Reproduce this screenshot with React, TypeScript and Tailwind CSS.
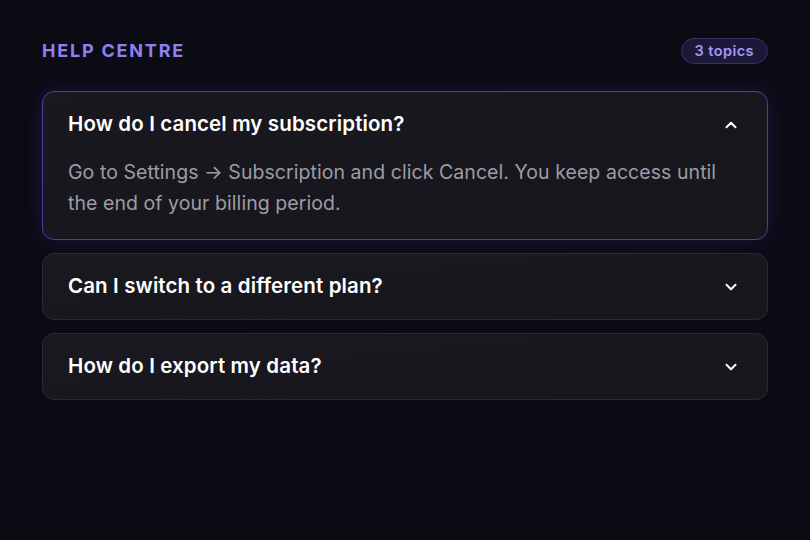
import React, { useState } from 'react';

const faqs = [
  {
    q: 'How do I cancel my subscription?',
    a: 'Go to Settings → Subscription and click Cancel. You keep access until the end of your billing period.',
  },
  {
    q: 'Can I switch to a different plan?',
    a: 'Yes. Pick a new plan from Settings → Subscription and the change applies from your next billing date.',
  },
  {
    q: 'How do I export my data?',
    a: 'Open Settings → Data and choose Export. We email you a download link within a few minutes.',
  },
];

const Chevron = ({ open }: { open: boolean }) => (
  <svg
    className="w-[18px] h-[18px] text-white"
    fill="none"
    stroke="currentColor"
    viewBox="0 0 24 24"
  >
    {open ? (
      <path strokeLinecap="round" strokeLinejoin="round" strokeWidth={2.6} d="M6 15l6-6 6 6" />
    ) : (
      <path strokeLinecap="round" strokeLinejoin="round" strokeWidth={2.6} d="M6 9l6 6 6-6" />
    )}
  </svg>
);

const App = () => {
  const [openIndex, setOpenIndex] = useState<number | null>(0);

  return (
    <div
      className="min-h-screen w-full bg-[#0b0b13] px-[42px] pt-[38px]"
      style={{ fontFamily: 'Inter, "Noto Sans", sans-serif' }}
    >
      {/* Header */}
      <div className="flex items-center justify-between h-[26px]">
        <h2 className="text-[18px] font-bold tracking-[0.1em] text-[#8f80f2] leading-none">
          HELP CENTRE
        </h2>
        <span className="h-[26px] px-[13px] flex items-center rounded-full bg-[#1c1938] border border-[#352e6b] text-[14.5px] font-semibold tracking-[0.03em] text-[#a497f7]">
          3 topics
        </span>
      </div>

      {/* Accordion */}
      <div className="mt-[27px] flex flex-col gap-[13px]">
        {faqs.map((item, index) => {
          const open = openIndex === index;
          return (
            <div
              key={index}
              className={
                open
                  ? 'rounded-[12px] border border-[#4b3fa6] bg-gradient-to-br from-[#19181f] to-[#17161d] shadow-[0_0_24px_rgba(90,70,220,0.18)]'
                  : 'rounded-[12px] border border-[#2a2935] bg-gradient-to-br from-[#1a1920] to-[#17161c]'
              }
            >
              <button
                onClick={() => setOpenIndex(open ? null : index)}
                className="w-full h-[65px] flex items-center justify-between pl-[25px] pr-[27px] text-left"
              >
                <span className="text-[20.5px] font-semibold text-white tracking-[0.006em]">{item.q}</span>
                <Chevron open={open} />
              </button>
              {open && (
                <p className="px-[25px] pb-[20px] text-[19.5px] leading-[31px] text-[#9d9ca5] tracking-[0.003em]">
                  {item.a}
                </p>
              )}
            </div>
          );
        })}
      </div>
    </div>
  );
};

export default App;
